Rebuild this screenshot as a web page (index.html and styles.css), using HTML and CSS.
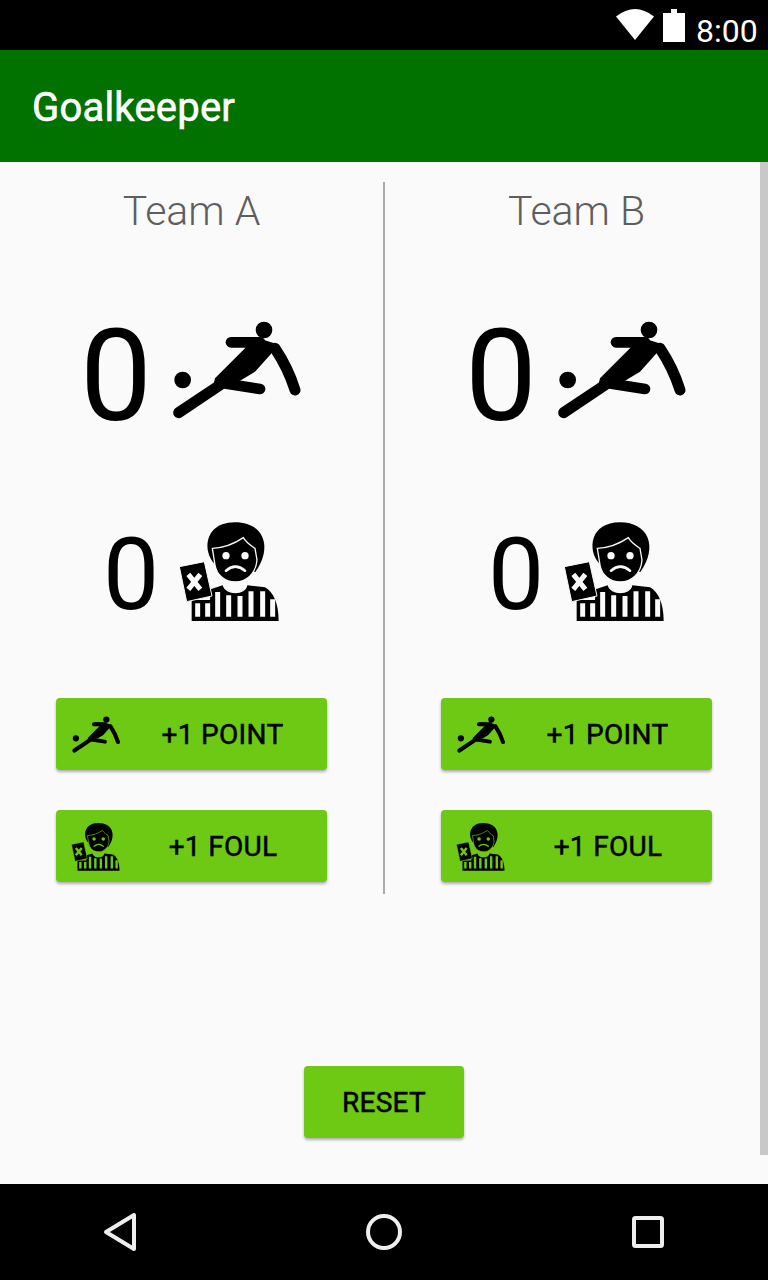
FILE: index.html
```html
<!DOCTYPE html>
<html lang="en">
<head>
<meta charset="utf-8">
<title>Goalkeeper</title>
<link rel="stylesheet" href="styles.css">
</head>
<body>
<svg class="defs" aria-hidden="true">
  <symbol id="kick" viewBox="0 0 450 360">
    <circle cx="312" cy="60" r="25" fill="#000"/>
    <circle cx="68" cy="210" r="25" fill="#000"/>
    <path d="M258 112 L165 205 L160 225 L240 212 L285 185 L330 135 L357 104 L300 86 L215 82 Z" fill="#000"/>
    <g fill="none" stroke="#000" stroke-linecap="round" stroke-linejoin="round">
      <path d="M213 97 H300" stroke-width="32"/>
      <path d="M345 115 Q385 175 405 240" stroke-width="33"/>
      <path d="M190 220 L300 237" stroke-width="32"/>
      <path d="M56 308 L180 225" stroke-width="33"/>
    </g>
  </symbol>
  <symbol id="ref" viewBox="0 0 360 360">
    <path d="M65 333 V270 H120 L122 238 L158 226 C165 258 228 258 232 226 L285 232 C310 246 326 280 326 333 Z" fill="#000"/>
    <path d="M83 280 V320 M113 280 V320 M143 246 V320 M176 256 V320 M210 258 V320 M243 244 V320 M278 244 V320 M308 268 V320" class="hole-stroke" stroke-width="15" fill="none"/>
    <path d="M132 160 C96 120 105 37 195 37 C280 37 310 110 256 186 Z" fill="#000"/>
    <path d="M127 115 C165 114 195 100 220 83 C230 100 245 108 255 115 L261 150 C258 192 228 216 196 216 C165 216 140 195 135 165 Z" fill="#000" class="hole-stroke" stroke-width="4"/>
    <circle cx="168" cy="137" r="11" class="hole-fill"/>
    <circle cx="225" cy="137" r="11" class="hole-fill"/>
    <path d="M168 182 Q196 158 225 182" fill="none" class="hole-stroke" stroke-width="8" stroke-linecap="round"/>
    <path d="M28 170 L103 155 L126 258 L50 275 Z" fill="#000" class="hole-stroke" stroke-width="3"/>
    <path d="M55 193 L91 238 M91 193 L55 238" class="hole-stroke" stroke-width="15"/>
  </symbol>
</svg>

<header class="status">
  <svg class="wifi" viewBox="0 0 38 31"><path d="M0 7.5 Q19 -7.5 38 7.5 L19 31 Z" fill="#fff"/></svg>
  <svg class="battery" viewBox="0 0 22 33"><path d="M0 33 V4 H8 V0 H14 V4 H22 V33 Z" fill="#fff"/></svg>
  <span class="clock">8:00</span>
</header>
<div class="appbar">Goalkeeper</div>

<main class="content">
  <div class="scrollbar"></div>
  <div class="teams">
    <section class="team">
      <h2 class="team-name">Team A</h2>
      <div class="score"><span class="score-num">0</span><svg class="score-icon"><use href="#kick"/></svg></div>
      <div class="fouls"><span class="foul-num">0</span><svg class="foul-icon"><use href="#ref"/></svg></div>
      <button class="btn btn-point"><svg class="btn-kick"><use href="#kick"/></svg><span class="btn-text">+1 POINT</span></button>
      <button class="btn btn-foul"><svg class="btn-ref"><use href="#ref"/></svg><span class="btn-text">+1 FOUL</span></button>
    </section>
    <div class="divider"></div>
    <section class="team">
      <h2 class="team-name">Team B</h2>
      <div class="score"><span class="score-num">0</span><svg class="score-icon"><use href="#kick"/></svg></div>
      <div class="fouls"><span class="foul-num">0</span><svg class="foul-icon"><use href="#ref"/></svg></div>
      <button class="btn btn-point"><svg class="btn-kick"><use href="#kick"/></svg><span class="btn-text">+1 POINT</span></button>
      <button class="btn btn-foul"><svg class="btn-ref"><use href="#ref"/></svg><span class="btn-text">+1 FOUL</span></button>
    </section>
  </div>
  <button class="btn btn-reset">RESET</button>
</main>

<footer class="navbar">
  <svg class="nav-icon" viewBox="0 0 48 48"><path d="M38 7 V41 L10 24 Z" fill="none" stroke="#eee" stroke-width="4" stroke-linejoin="round"/></svg>
  <svg class="nav-icon" viewBox="0 0 48 48"><circle cx="24" cy="24" r="16" fill="none" stroke="#eee" stroke-width="4"/></svg>
  <svg class="nav-icon" viewBox="0 0 48 48"><rect x="10" y="10" width="28" height="28" rx="1.5" fill="none" stroke="#eee" stroke-width="4"/></svg>
</footer>
</body>
</html>
```

FILE: styles.css
```css
* { box-sizing: border-box; }
html, body { margin: 0; padding: 0; }
body {
  width: 768px;
  height: 1280px;
  overflow: hidden;
  display: flex;
  flex-direction: column;
  font-family: Roboto, "Liberation Sans", sans-serif;
  background: #fafafa;
}
.defs { position: absolute; width: 0; height: 0; }
.hole-fill { fill: var(--hole); }
.hole-stroke { stroke: var(--hole); }

.status {
  height: 50px;
  background: #000;
  display: flex;
  align-items: flex-start;
  padding-left: 616px;
}
.wifi { width: 38px; height: 31px; margin-top: 9px; }
.battery { width: 22px; height: 33px; margin: 9px 0 0 9px; }
.clock {
  color: #fff;
  font-size: 32px;
  line-height: 44px;
  margin: 9px 0 0 11px;
}

.appbar {
  height: 112px;
  background: #017100;
  color: #fff;
  font-size: 40px;
  font-weight: 400;
  -webkit-text-stroke: 0.6px #fff;
  letter-spacing: 0.2px;
  line-height: 116px;
  padding-left: 32px;
}

.content {
  position: relative;
  height: 1022px;
  padding-top: 20px;
  display: flex;
  flex-direction: column;
  align-items: center;
}
.scrollbar {
  position: absolute;
  top: 0;
  right: 0;
  width: 8px;
  height: 993px;
  background: #c8c8c8;
}
.teams {
  display: flex;
  width: 100%;
  height: 712px;
}
.team {
  width: 383px;
  display: flex;
  flex-direction: column;
  align-items: center;
}
.divider { width: 2px; background: #aaa; }

.team-name {
  margin: 0;
  height: 58px;
  font-size: 41px;
  line-height: 58px;
  font-weight: 300;
  color: #5e5e5e;
}
.score {
  margin-top: 55px;
  height: 150px;
  width: 100%;
  display: flex;
  align-items: center;
  padding-left: 80px;
}
.score-num {
  width: 80px;
  margin-top: 12px;
  font-size: 128px;
  font-weight: 400;
  line-height: 150px;
  color: #000;
}
.score-icon { width: 150px; height: 120px; }
.fouls {
  margin-top: 65px;
  height: 120px;
  width: 100%;
  display: flex;
  align-items: center;
  padding-left: 103px;
  --hole: #fafafa;
}
.foul-num {
  width: 67px;
  margin-top: 10px;
  font-size: 100px;
  font-weight: 400;
  line-height: 120px;
  color: #000;
}
.foul-icon { width: 120px; height: 120px; }

.btn {
  border: 0;
  padding: 0;
  font-family: inherit;
  font-size: 28px;
  font-weight: 400;
  -webkit-text-stroke: 0.5px #000;
  letter-spacing: 0.3px;
  color: #000;
  background: #6dc914;
  --hole: #6dc914;
  border-radius: 4px;
  box-shadow: 0 2px 3px rgba(0, 0, 0, 0.3);
  height: 72px;
}
.btn-point, .btn-foul {
  width: 271px;
  display: flex;
  align-items: center;
}
.btn-point { margin-top: 68px; }
.btn-foul { margin-top: 40px; }
.btn-kick { width: 57px; height: 45px; margin-left: 11px; flex: none; }
.btn-ref { width: 58px; height: 58px; margin-left: 11px; flex: none; }
.btn-text { flex: 1; text-align: center; padding-right: 6px; }
.btn-reset { width: 160px; margin-top: 172px; }

.navbar {
  height: 96px;
  background: #000;
  display: flex;
  align-items: center;
  justify-content: space-between;
  padding: 0 96px;
}
.nav-icon { width: 48px; height: 48px; }
```
